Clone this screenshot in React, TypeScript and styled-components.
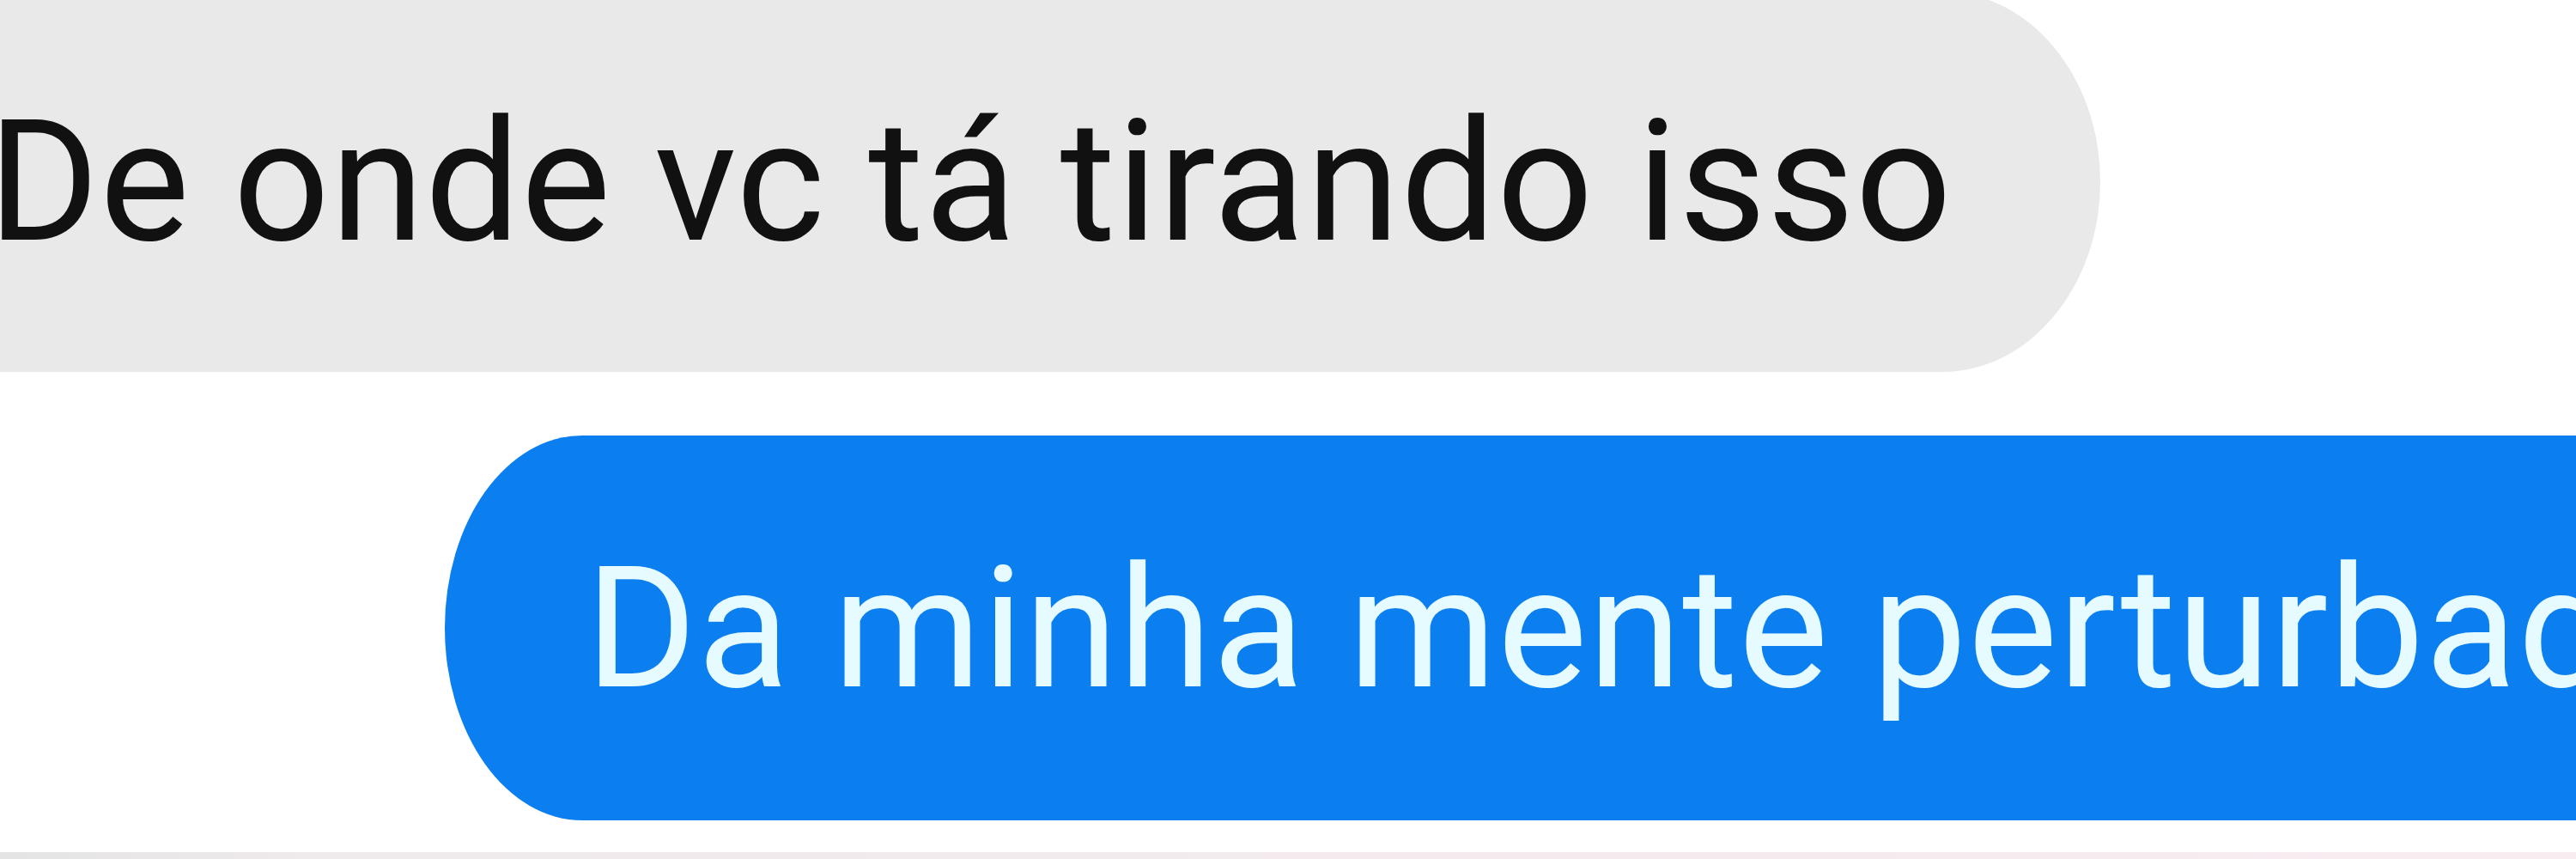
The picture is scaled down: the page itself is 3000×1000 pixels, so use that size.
import React from "react";
import styled, { createGlobalStyle } from "styled-components";

const GlobalStyle = createGlobalStyle`
  html,
  body {
    margin: 0;
    padding: 0;
    background: #ffffff;
  }
  body {
    font-family: Roboto, "Noto Sans", "Liberation Sans", sans-serif;
  }
`;

const Screen = styled.div`
  width: 3000px;
  height: 1000px;
  overflow: hidden;
  display: flex;
  flex-direction: column;
  background: #ffffff;
`;

const Thread = styled.div`
  flex: 1;
  display: flex;
  flex-direction: column;
  gap: 74px;
`;

const Row = styled.div<{ $mine?: boolean }>`
  display: flex;
  justify-content: flex-start;
  padding-left: ${(p) => (p.$mine ? "518px" : "0")};
`;

const Bubble = styled.div<{ $mine?: boolean }>`
  flex-shrink: 0;
  display: flex;
  align-items: center;
  height: ${(p) => (p.$mine ? "448px" : "443px")};
  box-sizing: border-box;
  white-space: nowrap;
  font-size: 197px;
  line-height: 1;
  letter-spacing: 1px;
  background: ${(p) => (p.$mine ? "#0c7ff0" : "#e9e9e9")};
  color: ${(p) => (p.$mine ? "#e6fbff" : "#111111")};
  ${(p) =>
    p.$mine
      ? `
    padding: 0 200px 0 164px;
    border-radius: 160px 0 0 160px / 224px 0 0 224px;
  `
      : `
    margin: -10px 0 0 -200px;
    padding: 0 172px 0 186px;
    border-radius: 0 185px 185px 0 / 0 222px 222px 0;
  `}
`;

const BottomEdge = styled.div`
  height: 8px;
  margin-top: 37px;
  background: linear-gradient(90deg, #e4e4e4 0%, #efeaec 12%, #f8ecf1 100%);
`;

const messages = [
  { id: 1, mine: false, text: "De onde vc tá tirando isso" },
  { id: 2, mine: true, text: "Da minha mente perturbada" },
];

const App: React.FC = () => {
  return (
    <>
      <GlobalStyle />
      <Screen>
        <Thread>
          {messages.map((m) => (
            <Row key={m.id} $mine={m.mine}>
              <Bubble $mine={m.mine}>{m.text}</Bubble>
            </Row>
          ))}
        </Thread>
        <BottomEdge />
      </Screen>
    </>
  );
};

export default App;
